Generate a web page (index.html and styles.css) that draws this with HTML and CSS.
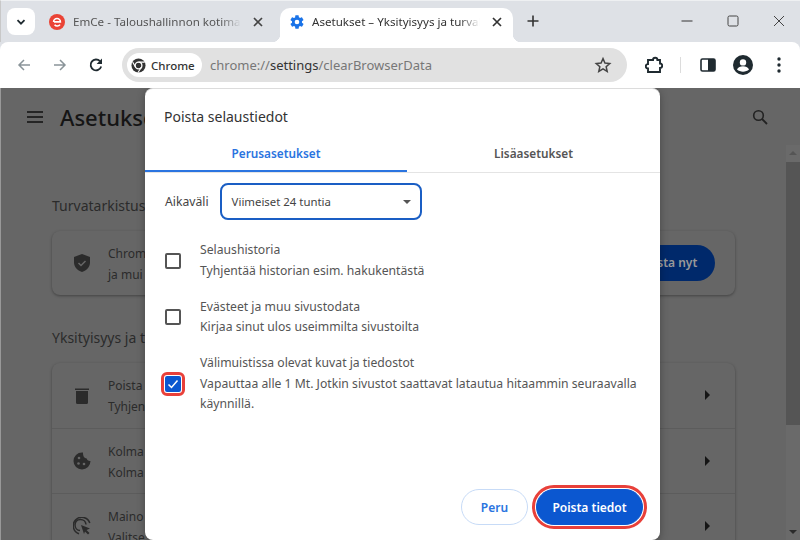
FILE: index.html
```html
<!DOCTYPE html>
<html lang="fi">
  <head>
    <meta charset="UTF-8" />
    <title>Asetukset</title>
    <link rel="stylesheet" href="styles.css">
  </head>
  <body>
    <!-- tab strip -->
    <div class="tabstrip">
      <div class="tab-search">
        <svg width="12" height="12" viewBox="0 0 12 12"><path d="M2.500 4.200 6 7.700l3.500-3.500" fill="none" stroke="#1f2a30" stroke-width="1.800"/></svg>
      </div>
      <div class="tab">
        <svg class="favicon" width="16" height="16" viewBox="0 0 16 16"><circle cx="8" cy="8" r="8" fill="#ea4335"/><path d="M4.600 7.900a3.400 3.400 0 0 1 6.800 0H5M11 10.600a3.400 3.400 0 0 1-5.400.2" fill="none" stroke="#fff" stroke-width="1.600"/></svg>
        <span class="tab-title">EmCe - Taloushallinnon kotimainen</span>
        <svg class="tab-close" width="10" height="10" viewBox="0 0 10 10"><path d="M1 1l8 8M9 1 1 9" stroke="#444" stroke-width="1.700"/></svg>
      </div>
      <div class="tab tab-active">
        <svg class="favicon" width="16" height="16" viewBox="0 0 24 24"><path fill="#1a73e8" d="M19.400 13c.04-.3.1-.65.1-1s-.06-.7-.1-1l2.100-1.650c.2-.15.25-.42.12-.64l-2-3.460c-.12-.22-.39-.3-.6-.22l-2.500 1c-.52-.4-1.080-.73-1.700-.98l-.37-2.650A.5.5 0 0 0 14 2h-4a.5.5 0 0 0-.5.42l-.37 2.650c-.62.25-1.180.59-1.700.98l-2.500-1c-.22-.08-.48 0-.6.22l-2 3.460c-.13.22-.07.49.12.64L4.570 11c-.04.32-.07.66-.07 1s.03.68.07 1l-2.110 1.650c-.19.15-.25.42-.12.64l2 3.460c.12.22.38.3.6.22l2.500-1c.52.4 1.080.73 1.700.98l.37 2.650c.04.24.25.42.5.42h4c.25 0 .46-.18.5-.42l.37-2.650c.62-.25 1.180-.58 1.700-.98l2.500 1c.22.08.48 0 .6-.22l2-3.460c.12-.22.07-.49-.12-.64L19.400 13zM12 15.500a3.500 3.500 0 1 1 0-7 3.500 3.500 0 0 1 0 7z"/></svg>
        <span class="tab-title">Asetukset – Yksityisyys ja turvallisuus</span>
        <svg class="tab-close" width="10" height="10" viewBox="0 0 10 10"><path d="M1 1l8 8M9 1 1 9" stroke="#333" stroke-width="1.700"/></svg>
      </div>
      <svg class="new-tab" width="12" height="12" viewBox="0 0 12 12"><path d="M6 .5v11M.5 6h11" stroke="#333" stroke-width="1.600"/></svg>
      <div class="window-controls">
        <svg width="12" height="12" viewBox="0 0 12 12"><path d="M.5 6h11" stroke="#444" stroke-width="1.100"/></svg>
        <svg width="12" height="12" viewBox="0 0 12 12"><rect x="1" y="1" width="10" height="10" rx="1.500" fill="none" stroke="#444" stroke-width="1"/></svg>
        <svg width="12" height="12" viewBox="0 0 12 12"><path d="M1 1l10 10M11 1 1 11" stroke="#444" stroke-width="1"/></svg>
      </div>
    </div>

    <!-- toolbar -->
    <div class="toolbar">
      <svg class="nav-btn" width="16" height="16" viewBox="0 0 16 16"><path d="M14 8H3M8 3 3 8l5 5" fill="none" stroke="#8a9499" stroke-width="1.500"/></svg>
      <svg class="nav-btn" width="16" height="16" viewBox="0 0 16 16"><path d="M2 8h11M8 3l5 5-5 5" fill="none" stroke="#8a9499" stroke-width="1.500"/></svg>
      <svg class="nav-btn" width="16" height="16" viewBox="0 0 16 16"><path d="M13.200 9.500A5.400 5.400 0 1 1 12 4.200" fill="none" stroke="#1f2a30" stroke-width="1.800"/><path d="M14 1.500V7H8.600z" fill="#1f2a30"/></svg>
      <div class="omnibox">
        <div class="chip">
          <svg width="15" height="15" viewBox="0 0 16 16"><circle cx="8" cy="8" r="7.500" fill="#333"/><circle cx="8" cy="8" r="3.600" fill="#333" stroke="#fff" stroke-width="1.400"/><path d="M8 4.400h6.600M5 10 1.800 4.400M10.900 10l-3.400 5.500" stroke="#fff" stroke-width="1.100"/></svg>
          <span>Chrome</span>
        </div>
        <span class="url"><span class="url-scheme">chrome://</span>settings<span class="url-scheme">/clearBrowserData</span></span>
        <svg class="star" width="18" height="18" viewBox="0 0 24 24"><path d="M12 3.500l2.600 5.900 6.400.6-4.800 4.300 1.400 6.300L12 17.300l-5.600 3.300 1.400-6.300L3 10l6.400-.6z" fill="none" stroke="#444" stroke-width="2"/></svg>
      </div>
      <div class="toolbar-actions">
        <svg width="18" height="18" viewBox="0 0 18 18"><path d="M3 4h5a2.200 2.200 0 0 1 4.400 0H15v3.500a2.200 2.200 0 0 1 0 4.400V16H3v-3.500a2.200 2.200 0 0 1 0-4.400z" fill="none" stroke="#1f2a30" stroke-width="1.900"/></svg>
        <span class="divider"></span>
        <svg width="16" height="16" viewBox="0 0 16 16"><rect x="1" y="2" width="14" height="12" rx="1.500" fill="#fff" stroke="#1f2a30" stroke-width="1.600"/><rect x="8" y="2" width="7" height="12" fill="#1f2a30"/></svg>
        <svg width="20" height="20" viewBox="0 0 20 20"><circle cx="10" cy="10" r="10" fill="#1f2a30"/><circle cx="10" cy="7.400" r="3.200" fill="#fff"/><path d="M4 14.500c1-2.500 3.500-3.300 6-3.300s5 .8 6 3.300c-1.500 1.300-3.700 2.200-6 2.200s-4.500-.9-6-2.200z" fill="#fff"/></svg>
        <svg class="menu-dots" width="4" height="16" viewBox="0 0 4 16"><circle cx="2" cy="2" r="1.700" fill="#1f2a30"/><circle cx="2" cy="8" r="1.700" fill="#1f2a30"/><circle cx="2" cy="14" r="1.700" fill="#1f2a30"/></svg>
      </div>
    </div>

    <!-- settings page behind the dialog -->
    <div class="page">
      <div class="page-main">
        <div class="page-header">
          <svg width="16" height="12" viewBox="0 0 16 12"><path d="M0 1h16M0 6h16M0 11h16" stroke="#111" stroke-width="1.700"/></svg>
          <h1>Asetukse</h1>
          <svg class="page-search" width="16" height="16" viewBox="0 0 16 16"><circle cx="6.500" cy="6.500" r="4.800" fill="none" stroke="#222" stroke-width="1.600"/><path d="M10 10l5 5" stroke="#222" stroke-width="1.800"/></svg>
        </div>
        <h2 class="section-title first">Turvatarkistus</h2>
        <div class="card safety-card">
          <svg class="row-icon" width="16" height="18" viewBox="0 0 16 18"><path d="M8 0l8 3v5.500c0 4.300-3.200 8-8 9.500-4.800-1.500-8-5.200-8-9.500V3z" fill="#2b2b2b"/><path d="M4.500 9l2.500 2.500 4.500-4.500" fill="none" stroke="#666" stroke-width="1.500"/></svg>
          <div class="row-text"><div>Chrom</div><div>ja mui</div></div>
          <div class="check-btn">Tarkista nyt</div>
        </div>
        <h2 class="section-title">Yksityisyys ja t</h2>
        <div class="card">
          <div class="row">
            <svg class="row-icon" width="14" height="17" viewBox="0 0 14 17"><path d="M0 1.500h14V3H0zM1 4h12v11.500a1.500 1.500 0 0 1-1.500 1.500h-9A1.500 1.500 0 0 1 1 15.500z" fill="#2b2b2b"/></svg>
            <div class="row-text"><div>Poista</div><div>Tyhjen</div></div>
            <span class="arrow"></span>
          </div>
          <div class="row">
            <svg class="row-icon" width="18" height="18" viewBox="0 0 18 18"><path d="M9 .5a8.500 8.500 0 1 0 8.500 8.500c-2 .3-3.500-.8-3.800-2.500C11.500 6.500 9.800 4.500 10 .6z" fill="#2b2b2b"/><circle cx="6" cy="6" r="1.300" fill="#666"/><circle cx="5.500" cy="11.500" r="1.300" fill="#666"/><circle cx="11" cy="12" r="1.300" fill="#666"/></svg>
            <div class="row-text"><div>Kolma</div><div>Kolma</div></div>
            <span class="arrow"></span>
          </div>
          <div class="row">
            <svg class="row-icon" width="18" height="18" viewBox="0 0 18 18"><path d="M7 13.500a5.500 5.500 0 1 1 6-6M6 16.800A8.500 8.500 0 1 1 16.800 6" fill="none" stroke="#2b2b2b" stroke-width="1.500"/><path d="M8 8l9 3.500-3.500 1.500 3 3-1.500 1.500-3-3L11 17z" fill="#2b2b2b"/></svg>
            <div class="row-text"><div>Maino</div><div>Valitse</div></div>
            <span class="arrow"></span>
          </div>
        </div>
      </div>
      <div class="scrollbar">
        <span class="scroll-up"></span>
        <div class="scroll-thumb"></div>
        <span class="scroll-down"></span>
      </div>

      <!-- dialog -->
      <div class="dialog">
        <div class="dialog-title">Poista selaustiedot</div>
        <div class="dialog-tabs">
          <div class="dialog-tab selected">Perusasetukset</div>
          <div class="dialog-tab">Lisäasetukset</div>
        </div>
        <div class="dialog-body">
          <div class="range">
            <span>Aikaväli</span>
            <div class="select">Viimeiset 24 tuntia<span class="select-caret"></span></div>
          </div>
          <div class="option">
            <span class="checkbox"></span>
            <div class="option-text"><div>Selaushistoria</div><div>Tyhjentää historian esim. hakukentästä</div></div>
          </div>
          <div class="option">
            <span class="checkbox"></span>
            <div class="option-text"><div>Evästeet ja muu sivustodata</div><div>Kirjaa sinut ulos useimmilta sivustoilta</div></div>
          </div>
          <div class="option">
            <span class="checkbox checked">
              <svg width="12" height="12" viewBox="0 0 12 12"><path d="M1.500 6.500l3 3 6-7" fill="none" stroke="#fff" stroke-width="1.500"/></svg>
            </span>
            <div class="option-text"><div>Välimuistissa olevat kuvat ja tiedostot</div><div>Vapauttaa alle 1 Mt. Jotkin sivustot saattavat latautua hitaammin seuraavalla käynnillä.</div></div>
          </div>
        </div>
        <div class="dialog-footer">
          <div class="btn btn-cancel">Peru</div>
          <div class="btn btn-confirm">Poista tiedot</div>
        </div>
      </div>
    </div>
  </body>
</html>
```

FILE: styles.css
```css
html,
body {
  margin: 0;
  height: 540px;
  overflow: hidden;
}

body {
  width: 800px;
  display: flex;
  flex-direction: column;
  font-family: "Noto Sans", sans-serif;
  font-size: 12px;
  color: #444;
  background-color: #dee1e6;
}

/* tab strip */
.tabstrip {
  height: 42px;
  flex: none;
  box-sizing: border-box;
  padding: 7px 0 0 6px;
  display: flex;
  align-items: flex-start;
  border-top: 1px solid #eef0f2;
  border-left: 1px solid #c8c8c8;
}

.tab-search {
  width: 28px;
  height: 27px;
  flex: none;
  background-color: #fff;
  border-radius: 8px;
  display: flex;
  align-items: center;
  justify-content: center;
}

.tab {
  width: 245px;
  height: 34px;
  flex: none;
  box-sizing: border-box;
  padding: 0 17px 7px 14px;
  display: flex;
  align-items: center;
  font-size: 11.600px;
  color: #555;
}

.tab-active {
  width: 233px;
  position: relative;
  padding: 0 11px 7px 9px;
  background-color: #fff;
  border-radius: 10px 10px 0 0;
  color: #333;
}

/* concave corners at the foot of the active tab */
.tab-active::before,
.tab-active::after {
  content: "";
  position: absolute;
  bottom: 0;
  width: 8px;
  height: 8px;
}

.tab-active::before {
  left: -8px;
  background: radial-gradient(circle at 0 0, transparent 8px, #fff 8.500px);
}

.tab-active::after {
  right: -8px;
  background: radial-gradient(circle at 100% 0, transparent 8px, #fff 8.500px);
}

.favicon {
  flex: none;
  margin-right: 8px;
}

.tab-active .favicon {
  margin-right: 7px;
}

.tab-title {
  flex: 1;
  overflow: hidden;
  white-space: nowrap;
  -webkit-mask-image: linear-gradient(to right, #000 88%, transparent);
  mask-image: linear-gradient(to right, #000 88%, transparent);
}

.tab-close {
  flex: none;
  margin-left: 12px;
}

.new-tab {
  margin: 7px 0 0 14px;
}

.window-controls {
  margin-left: auto;
  margin-top: 7px;
  display: flex;
  gap: 34px;
  padding-right: 15px;
}

/* toolbar */
.toolbar {
  height: 46px;
  flex: none;
  box-sizing: border-box;
  display: flex;
  align-items: center;
  padding: 0 0 0 16px;
  background-color: #fff;
  border-radius: 8px 8px 0 0;
}

.nav-btn {
  margin-right: 20px;
}

.omnibox {
  width: 505px;
  height: 34px;
  margin-left: -2px;
  flex: none;
  box-sizing: border-box;
  padding: 0 15px 0 5px;
  display: flex;
  align-items: center;
  background-color: #e1e1e1;
  border-radius: 17px;
}

.chip {
  width: 75px;
  height: 24px;
  box-sizing: border-box;
  padding-left: 4px;
  display: flex;
  align-items: center;
  gap: 5px;
  background-color: #fff;
  border-radius: 12px;
  font-size: 11.500px;
  font-weight: 500;
  color: #333;
}

.url {
  margin-left: 8px;
  font-size: 13px;
  color: #333;
}

.url-scheme {
  color: #777;
}

.star {
  margin-left: auto;
}

.toolbar-actions {
  flex: 1;
  display: flex;
  align-items: center;
  padding-left: 18px;
  gap: 17px;
}

.divider {
  width: 1px;
  height: 16px;
  margin-right: 2px;
  background-color: #dcdcdc;
}

.menu-dots {
  margin-left: 7px;
}

/* page behind the dialog */
.page {
  flex: 1;
  position: relative;
  display: flex;
  background-color: #666;
  box-shadow: inset 1px 0 0 #999;
  overflow: hidden;
}

.page-main {
  flex: 1;
  padding-left: 27px;
}

.page-header {
  height: 58px;
  display: flex;
  align-items: center;
  gap: 17px;
}

.page-header h1 {
  margin: 0;
  font-size: 22px;
  font-weight: 500;
  color: #151515;
}

.page-search {
  margin-left: auto;
  margin-right: 18px;
}

.section-title {
  margin: 33px 0 16px 25px;
  font-size: 14px;
  font-weight: 400;
  color: #2b2b2b;
}

.section-title.first {
  margin-top: 50px;
}

.card {
  margin-left: 25px;
  width: 683px;
  border-radius: 8px;
  background-color: #666;
  box-shadow: 0 1px 3px rgba(0, 0, 0, 0.35);
}

.safety-card {
  height: 64px;
  display: flex;
  align-items: center;
  padding-right: 20px;
  box-sizing: border-box;
}

.row {
  height: 65.500px;
  display: flex;
  align-items: center;
  box-sizing: border-box;
  border-bottom: 1px solid #5c5c5c;
}

.row-icon {
  flex: none;
  margin-left: 21px;
  width: 18px;
}

.row-text {
  margin-left: 17px;
  padding-top: 2px;
  line-height: 21px;
  white-space: nowrap;
  color: #2b2b2b;
}

.check-btn {
  margin-left: auto;
  width: 120px;
  height: 36px;
  box-sizing: border-box;
  padding-left: 16px;
  line-height: 36px;
  text-align: center;
  font-weight: 600;
  color: #999;
  background-color: #00296b;
  border-radius: 18px;
}

.arrow {
  margin-left: auto;
  margin-right: 25px;
  border-left: 5px solid #151515;
  border-top: 5px solid transparent;
  border-bottom: 5px solid transparent;
}

.scrollbar {
  width: 14px;
  margin-top: 57px;
  display: flex;
  flex-direction: column;
  align-items: center;
  background-color: #6a6a6a;
}

.scroll-thumb {
  width: 100%;
  height: 263px;
  margin-top: 7px;
  background-color: #555;
}

.scroll-up {
  margin-top: 6px;
  border-left: 4px solid transparent;
  border-right: 4px solid transparent;
  border-bottom: 4px solid #555;
}

.scroll-down {
  margin-top: auto;
  margin-bottom: 6px;
  border-left: 4px solid transparent;
  border-right: 4px solid transparent;
  border-top: 4px solid #2b2b2b;
}

/* dialog */
.dialog {
  position: absolute;
  left: 145px;
  top: 0;
  width: 515px;
  height: 452px;
  box-sizing: border-box;
  display: flex;
  flex-direction: column;
  background-color: #fff;
  border-top: 1px solid #dcdcdc;
  border-radius: 8px;
  box-shadow: 0 2px 8px rgba(0, 0, 0, 0.3);
}

.dialog-title {
  padding: 18px 19px 0;
  font-size: 14px;
  color: #333;
}

.dialog-tabs {
  margin-top: 12px;
  display: flex;
  border-bottom: 1px solid #e4e4e4;
}

.dialog-tab {
  flex: 1;
  height: 34px;
  box-sizing: border-box;
  padding-top: 7px;
  text-align: center;
  font-size: 11.800px;
  font-weight: 600;
  color: #555;
}

.dialog-tab.selected {
  flex: none;
  width: 262px;
  color: #2a74e0;
  border-bottom: 2px solid #2a74e0;
}

.dialog-body {
  flex: 1;
  padding: 10px 20px 0;
  font-size: 12.200px;
}

.range {
  display: flex;
  align-items: center;
  gap: 11px;
}

.select {
  width: 202px;
  height: 37px;
  box-sizing: border-box;
  padding: 0 9px 0 10px;
  display: flex;
  align-items: center;
  justify-content: space-between;
  font-size: 11.400px;
  border: 2px solid #1a5ec4;
  border-radius: 8px;
}

.select-caret {
  border-left: 4px solid transparent;
  border-right: 4px solid transparent;
  border-top: 4px solid #555;
}

.option {
  margin-top: 15.500px;
  display: flex;
  align-items: center;
}

.range + .option {
  margin-top: 20px;
}

.checkbox {
  flex: none;
  width: 16px;
  height: 16px;
  box-sizing: border-box;
  border: 2px solid #555;
  border-radius: 2px;
}

.checkbox.checked {
  display: flex;
  align-items: center;
  justify-content: center;
  background-color: #0b57d0;
  border-color: #0b57d0;
  outline: 3px solid #e8403a;
  outline-offset: 1px;
}

.option-text {
  margin-left: 19px;
  line-height: 20.500px;
  color: #555;
}

.dialog-footer {
  display: flex;
  justify-content: flex-end;
  align-items: center;
  gap: 8px;
  padding: 0 17px 15px;
}

.btn {
  height: 36px;
  line-height: 35px;
  box-sizing: border-box;
  text-align: center;
  border-radius: 18px;
  font-weight: 600;
}

.btn-cancel {
  width: 67px;
  color: #2a74e0;
  border: 1px solid #c7dbf7;
}

.btn-confirm {
  width: 107px;
  color: #fff;
  background-color: #0b57d0;
  border: 1px solid #0b57d0;
  outline: 3px solid #e8403a;
  outline-offset: 1px;
}
```
